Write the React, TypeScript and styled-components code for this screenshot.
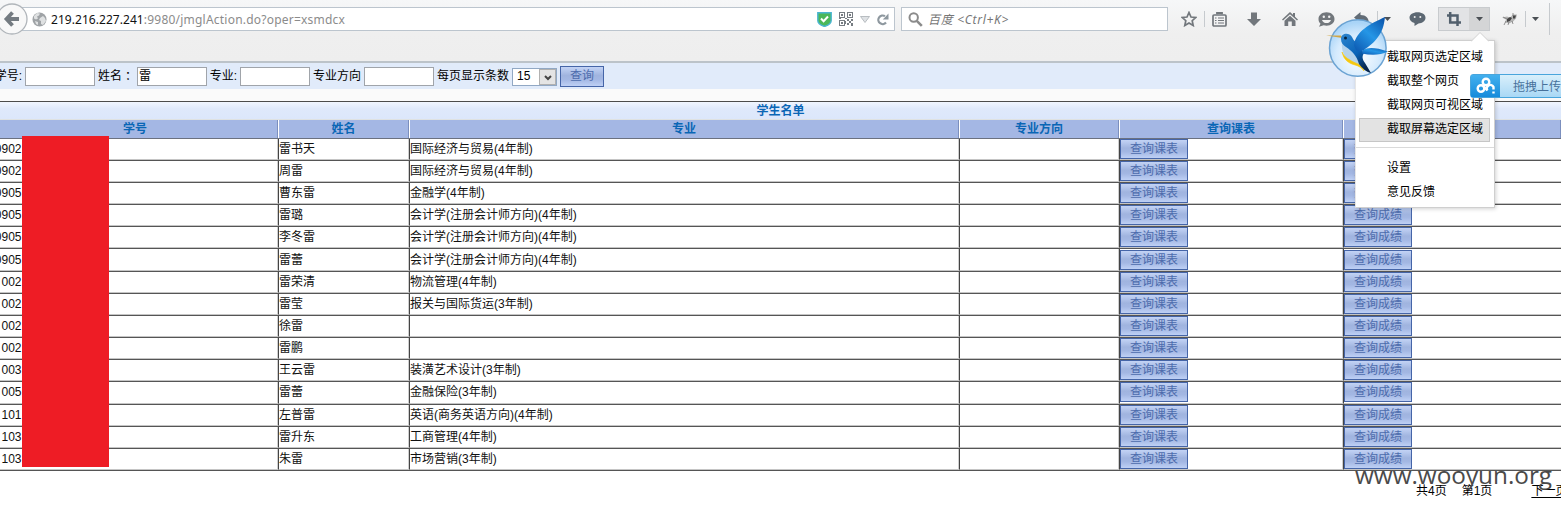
import React from 'react';
import styled, { createGlobalStyle, css } from 'styled-components';

const Global = createGlobalStyle`
  * { box-sizing: border-box; }
  html, body { margin: 0; padding: 0; overflow: hidden; background: #fff; }
  body { font: 12px/16px "Liberation Sans", "Noto Sans CJK SC", sans-serif; color: #000; }
  svg { display: block; flex: none; }
`;

const Screen = styled.div`
  position: relative;
  width: 1561px;
  height: 505px;
  overflow: hidden;
  white-space: nowrap;
`;

/* ---------- browser chrome ---------- */
const Toolbar = styled.header`
  display: flex;
  align-items: flex-start;
  height: 63px;
  padding-top: 7px;
  background: linear-gradient(#f6f7f8, #efefef 55%, #eeeeee);
  border-bottom: 2px solid #bcc3c9;
`;
const fieldBox = css`
  display: flex;
  align-items: center;
  height: 24px;
  background: #fff;
  border: 1px solid #bcc5ce;
`;
const BackButton = styled.div`
  flex: none;
  z-index: 1;
  width: 36px;
  height: 32px;
  margin: -4px -20px 0 -8px;
`;
const AddressBar = styled.div`
  ${fieldBox}
  width: 887px;
  padding: 0 5px 0 23px;
  font-family: "Noto Sans", sans-serif;
  font-size: 12px;
`;
const Url = styled.span`
  flex: 1;
  padding: 1px 0 0 4px;
  color: #8b8b8b;
  letter-spacing: 0.22px;
  b { font-weight: 400; color: #111; letter-spacing: 0.05px; }
`;
const AddressIcons = styled.div`
  display: flex;
  align-items: center;
  gap: 7px;
`;
const SearchBar = styled.div`
  ${fieldBox}
  width: 267px;
  margin-left: 6px;
  padding-left: 6px;
  gap: 5px;
  color: #777;
  font: italic 12px "Noto Sans", "Noto Sans CJK SC", sans-serif;
  letter-spacing: 0.7px;
`;
const Tools = styled.div`
  display: flex;
  align-items: center;
  height: 24px;
  padding-left: 6px;
`;
const Tool = styled.div<{ $w: number; $bg?: string; $shift?: number }>`
  display: flex;
  align-items: center;
  justify-content: center;
  width: ${p => p.$w}px;
  height: 24px;
  padding-left: ${p => p.$shift || 0}px;
  background: ${p => p.$bg || 'none'};
`;
const Divider = styled.div<{ $h?: number; $ml?: number }>`
  width: 1px;
  height: ${p => p.$h || 16}px;
  margin-left: ${p => p.$ml || 0}px;
  background: #c6cace;
`;
const ActiveTool = styled.div`
  display: flex;
  height: 24px;
  outline: 1px solid #c8cbce;
  outline-offset: -1px;
`;

/* ---------- query form ---------- */
const QueryForm = styled.div`
  display: flex;
  align-items: center;
  height: 26px;
  background: #e1ebfa;
`;
const Label = styled.span<{ $w: number }>`
  width: ${p => p.$w}px;
  height: 18px;
  line-height: 18px;
  flex: none;
  display: flex;
  justify-content: flex-end;
  padding-right: 3px;
`;
const WideColon = styled.span`
  font-family: "Noto Sans CJK TC", sans-serif;
`;
const Field = styled.div`
  width: 70px;
  height: 19px;
  flex: none;
  padding-left: 1px;
  line-height: 16px;
  background: #fff;
  border: 1px solid #a0a4aa;
`;
const Select = styled.div`
  display: flex;
  justify-content: space-between;
  width: 45px;
  height: 18px;
  margin: 1px 3px 0 0;
  padding-left: 4px;
  line-height: 15px;
  background: #fff;
  border: 1px solid #91a8c4;
`;
const SelectArrow = styled.span`
  display: flex;
  align-items: center;
  justify-content: center;
  width: 17px;
  padding-top: 3px;
  background: #e4e4e4;
  border: 1px solid #b1b1b1;
`;
const QueryButton = styled.button<{ $w: number; $h: number }>`
  width: ${p => p.$w}px;
  height: ${p => p.$h}px;
  padding: 0;
  flex: none;
  font: inherit;
  line-height: 16px;
  color: #4d6cad;
  border: 1px solid #4565a8;
  background: linear-gradient(#c3d3f5, #a0b4df 45%, #a3b7e3 65%, #bed0f5);
`;
const Spacer = styled.div`
  height: 12px;
  background: #fafafa;
`;

/* ---------- student table ---------- */
const Table = styled.div`
  border-top: 1px solid #4c4c4c;
`;
const TableTitle = styled.div`
  height: 18px;
  line-height: 18px;
  text-align: center;
  font-weight: 700;
  color: #0a66b5;
  background: linear-gradient(#f1f6ff, #dfe9fb 40%, #dce7fb);
  border-bottom: 1px solid #dfe2e2;
`;
const Row = styled.div<{ $head?: boolean }>`
  display: grid;
  grid-template-columns: 278px 131px 550px 160px 224px 218px;
  grid-template-rows: minmax(0, 1fr);
  height: ${p => (p.$head ? 18.7 : 22.16)}px;
  border-bottom: 1px solid ${p => (p.$head ? '#6b7180' : '#555')};
  font-weight: ${p => (p.$head ? 700 : 400)};
  color: ${p => (p.$head ? '#0a66b5' : '#111')};
  background: ${p => (p.$head ? '#a4b7e4' : '#fff')};
`;
const HeadCell = styled.div`
  line-height: 18px;
  text-align: center;
  border-left: 1px solid #fff;
  border-right: 1px solid #7b8fbe;
  &:first-child { padding-right: 7px; border-left: none; }
`;
const Cell = styled.div`
  display: flex;
  align-items: center;
  min-height: 0;
  border-left: 1px solid #444;
  border-right: 1px solid #cfcfcf;
  border-bottom: 1px solid #c5c5c5;
  &:first-child { border-left: none; }
  &:last-child { border-right: none; }
`;
const StudentId = styled.span`
  display: flex;
  justify-content: flex-end;
  width: 21.500px;
`;
const Redaction = styled.div`
  position: absolute;
  left: 22px;
  top: 136px;
  width: 87px;
  height: 331px;
  background: #ee1c25;
`;
const Pager = styled.div`
  display: flex;
  height: 34px;
  padding: 12px 0 0 1416px;
  u { margin-left: 39px; text-underline-offset: 2px; }
  span + span { margin-left: 15px; }
`;
const Watermark = styled.div`
  position: absolute;
  left: 1355px;
  top: 460px;
  font: 24.3px/30px "Open Sans", sans-serif;
  color: #4a4a4a;
`;

/* ---------- floating capture menu ---------- */
const Menu = styled.div`
  position: absolute;
  left: 1355px;
  top: 40px;
  width: 140px;
  height: 168px;
  padding: 5px 4px;
  background: #fff;
  border: 1px solid #cfcfcf;
  border-left-color: #e6e6e6;
  box-shadow: 1px 1px 4px rgba(0, 0, 0, 0.18);
`;
const MenuArrow = styled.svg`
  position: absolute;
  left: 115px;
  top: -9px;
`;
const MenuItem = styled.div<{ $active?: boolean }>`
  height: 24px;
  padding-left: 27px;
  line-height: 21px;
  margin: 0 0 0 -1px;
  border: 1px solid ${p => (p.$active ? '#c6c6c6' : 'transparent')};
  background: ${p => (p.$active ? '#e3e3e3' : 'transparent')};
`;
const MenuRule = styled.div`
  height: 1px;
  margin: 5px -4px 9px;
  background: #dadada;
`;
const Bird = styled.svg`
  position: absolute;
  left: 1325px;
  top: 14px;
`;
const Uploader = styled.div`
  position: absolute;
  left: 1470px;
  top: 74px;
  display: flex;
  width: 110px;
  height: 24px;
  color: #47719b;
  line-height: 25px;
  background: linear-gradient(#d9effb, #a9d8f5);
  border: 1px solid #49a5dc;
  border-radius: 3px;
`;
const UploaderLogo = styled.div`
  display: flex;
  align-items: center;
  justify-content: center;
  width: 29px;
  height: 22px;
  margin-right: 13px;
  background: linear-gradient(#43b0ee, #168bdb);
`;

const Caret = ({ color = '#4b5055' }: { color?: string }) => (
  <svg width="7" height="4" viewBox="0 0 7 4"><path d="M0 0h7L3.5 4z" fill={color} /></svg>
);

const BackIcon = () => (
  <svg width="36" height="32" viewBox="0 0 36 32">
    <circle cx="20" cy="16" r="15" fill="#f8f8f8" stroke="#b0b5ba" strokeWidth="1.3" />
    <path d="M27 16H16M20.500 9.500L14.500 16l6 6.500" fill="none" stroke="#747b81" strokeWidth="3.800" />
  </svg>
);
const GlobeIcon = () => (
  <svg width="15" height="15" viewBox="0 0 15 15">
    <circle cx="7.500" cy="7.500" r="7" fill="#9fa3a6" />
    <path d="M2 4l3-3 3 .5-1 2-2 1 1 2-2 1-2-1zM8 6l3-2 2 2 1 3-3 4-2-1V9L7 8zM3 9l3 1 0 3-2-1z" fill="#dfe1e2" />
  </svg>
);
const ShieldIcon = () => (
  <svg width="15" height="15" viewBox="0 0 15 15">
    <path d="M.8.8h13.400v7.700c0 3-3.700 5-6.700 6-3-1-6.700-3-6.700-6z" fill="#4bb75a" stroke="#4ab5d1" strokeWidth="1.400" />
    <path d="M4 6.500l2.600 2.700L11 4.500" fill="none" stroke="#fff" strokeWidth="2" />
  </svg>
);
const QrIcon = () => (
  <svg width="14" height="14" viewBox="0 0 14 14" shapeRendering="crispEdges">
    <path d="M.5.5h5v5h-5zM8.500.5h5v5h-5zM.5 8.500h5v5h-5z" fill="none" stroke="#777d83" />
    <path d="M2 2h2v2H2zM10 2h2v2h-2zM2 10h2v2H2zM8 7h2v2H8zM10 9h2v2h-2zM12 7h2v2h-2zM8 11h2v2H8zM12 11h2v3h-2zM6 6h2v1H6zM6 9h1v3H6zM0 6h2v1H0z" fill="#777d83" />
  </svg>
);
const ReloadIcon = () => (
  <svg width="12" height="13" viewBox="0 0 12 13">
    <path d="M9 9.500A4.300 4.300 0 1 1 8 3.200" fill="none" stroke="#8e989f" strokeWidth="2.200" />
    <path d="M11.500.5v6H5.800z" fill="#8e989f" />
  </svg>
);
const SearchIcon = () => (
  <svg width="15" height="15" viewBox="0 0 15 15" fill="none" stroke="#8b8b8b">
    <circle cx="5.700" cy="5.500" r="4.200" strokeWidth="2" />
    <path d="M8.800 8.800l5 5" strokeWidth="2.600" />
  </svg>
);
const StarIcon = () => (
  <svg width="16" height="16" viewBox="0 0 16 16">
    <path d="M8 1.500l2 4.500 4.800.5-3.600 3.200 1 4.800L8 12l-4.200 2.500 1-4.800L1.200 6.500 6 6z" fill="none" stroke="#72777c" strokeWidth="1.700" />
  </svg>
);
const ListIcon = () => (
  <svg width="15" height="15" viewBox="0 0 15 15" fill="none" stroke="#72777c">
    <rect x="1" y="3" width="13" height="11" rx="1" strokeWidth="1.700" />
    <path d="M5 2.300V1h5v1.300" strokeWidth="1.800" />
    <path d="M3 6h1.500M6 6h6M3 8.500h1.500M6 8.500h6M3 11h1.500M6 11h6" strokeWidth="1.200" />
  </svg>
);
const DownIcon = () => (
  <svg width="14" height="14" viewBox="0 0 14 14"><path d="M4 .5h6V7h4l-7 7-7-7h4z" fill="#72777c" /></svg>
);
const HomeIcon = () => (
  <svg width="16" height="14" viewBox="0 0 16 14">
    <path d="M0 7.500L8 0l3 2.800V1h2v3.700L16 7.500l-1 1-7-6.300L1 8.500zM2.500 8.700L8 3.800l5.500 4.900V14H9.800V9.500H6.200V14H2.500z" fill="#72777c" />
  </svg>
);
const SmileIcon = () => (
  <svg width="17" height="15" viewBox="0 0 17 15">
    <path d="M8.500.3c4.600 0 8 2.900 8 6.700s-3.400 6.700-8 6.700c-1 0-2-.1-2.800-.4L1 14.700l1.500-3C1.200 10.500.5 9 .5 7 .5 3.200 4 .3 8.500.3z" fill="#72777c" />
    <circle cx="5.800" cy="4.800" r="1.200" fill="#f3f3f3" /><circle cx="11.200" cy="4.800" r="1.200" fill="#f3f3f3" />
    <path d="M4 8h9c-.5 2-2.300 3.100-4.500 3.100S4.500 10 4 8z" fill="#f3f3f3" />
  </svg>
);
const UndoIcon = () => (
  <svg width="16" height="14" viewBox="0 0 16 14">
    <path d="M6.500 0v3C12 3 15 6 15 12c-2-3-4-4-8.500-4v3L0 5.500z" fill="#626c76" />
  </svg>
);
const ChatIcon = () => (
  <svg width="17" height="14" viewBox="0 0 17 14">
    <path d="M8.500.3c4.600 0 8 2.300 8 5.500s-3.400 5.700-7 5.700L5.500 14v-3C2.500 10.200.5 8.300.5 5.800.5 2.600 4 .3 8.500.3z" fill="#5c6873" />
    <circle cx="5.700" cy="5" r="1" fill="#eee" /><circle cx="11.300" cy="5" r="1" fill="#eee" />
  </svg>
);
const CropIcon = () => (
  <svg width="14" height="14" viewBox="0 0 14 14">
    <path d="M3.200 0v10.500H14M0 3.500h10.500V14" fill="none" stroke="#52606d" strokeWidth="2.500" />
  </svg>
);
const FlyIcon = () => (
  <svg width="16" height="13" viewBox="0 0 16 13">
    <path d="M0 4.500l5-1 3 1 3-3 4 0-1 4-3 3-4 2-4-1 1-3z" fill="#b4b4b4" />
    <path d="M5 6l3-2 2 1-2 3-3 1zM11 2.500l3 0-1 3-2 0z" fill="#454545" />
    <path d="M4 8l-2 4M7 9l-1 3M10 8l1 3M11 3V0M1 4l4 2" stroke="#777" strokeWidth=".8" />
  </svg>
);

const BirdLogo = () => (
  <Bird width="64" height="66" viewBox="0 0 64 66">
    <defs>
      <radialGradient id="disc" cx=".5" cy=".65" r=".6">
        <stop offset="0" stopColor="#ffffff" /><stop offset=".65" stopColor="#d4eafd" /><stop offset="1" stopColor="#a9d4f7" />
      </radialGradient>
      <linearGradient id="wing" x1=".9" y1="0" x2=".1" y2="1">
        <stop offset="0" stopColor="#0b56ad" /><stop offset=".5" stopColor="#2596e6" /><stop offset="1" stopColor="#0e5cb4" />
      </linearGradient>
      <linearGradient id="body" x1="0" y1="0" x2=".6" y2="1">
        <stop offset="0" stopColor="#2d86cf" /><stop offset=".6" stopColor="#0a63b8" /><stop offset="1" stopColor="#07264d" />
      </linearGradient>
    </defs>
    <circle cx="32.800" cy="34" r="28.300" fill="url(#disc)" stroke="#6ba3d3" strokeWidth="1.500" />
    <path d="M17 28c-1 10 3 17 10 20l10 5-3-12z" fill="#b5d3ec" />
    <path d="M17 38c2 8 6 11 13 13 4 1 7 3 9 6-2-8-9-7-14-11-4-2-6-4-8-8z" fill="#f6c80f" stroke="#f6c80f" strokeWidth=".6" />
    <path d="M1 21.500l15 0 1.500 2.500z" fill="#d0a646" />
    <path d="M16 25c0-6 8-7 11-2 1 2 2 4 4 5l8 11c-2 3-2 6 1 10l6 10c-5-1-9-5-12-9-2-8-7-13-13-17-3-2-5-4-5-8z" fill="url(#body)" />
    <path d="M38 36c5-3 12-3 25 1.500-8 4-17 4-26 2z" fill="url(#wing)" />
    <path d="M29 31C31 17 45 10 60 3c-1 9-3 15-7 20-4 6-9 9-14 13-3 2-8 3-10-5z" fill="url(#wing)" />
    <circle cx="20.500" cy="24" r="1.500" fill="#06243f" />
  </Bird>
);

const headings = ['学号', '姓名', '专业', '专业方向', '查询课表', '查询成绩'];

const rows: [string, string, string][] = [
  ['0902', '雷书天', '国际经济与贸易(4年制)'],
  ['0902', '周雷', '国际经济与贸易(4年制)'],
  ['0905', '曹东雷', '金融学(4年制)'],
  ['0905', '雷璐', '会计学(注册会计师方向)(4年制)'],
  ['0905', '李冬雷', '会计学(注册会计师方向)(4年制)'],
  ['0905', '雷蕾', '会计学(注册会计师方向)(4年制)'],
  ['002', '雷荣清', '物流管理(4年制)'],
  ['002', '雷莹', '报关与国际货运(3年制)'],
  ['002', '徐雷', ''],
  ['002', '雷鹏', ''],
  ['003', '王云雷', '装潢艺术设计(3年制)'],
  ['005', '雷蕾', '金融保险(3年制)'],
  ['101', '左普雷', '英语(商务英语方向)(4年制)'],
  ['103', '雷升东', '工商管理(4年制)'],
  ['103', '朱雷', '市场营销(3年制)'],
];

export default function App() {
  return (
    <Screen>
      <Global />
      <Toolbar>
        <BackButton><BackIcon /></BackButton>
        <AddressBar>
          <GlobeIcon />
          <Url><b>219.216.227.241</b>:9980/jmglAction.do?oper=xsmdcx</Url>
          <AddressIcons>
            <ShieldIcon /><QrIcon />
            <svg width="10" height="7" viewBox="0 0 10 7"><path d="M.5.5h9L5 6.500z" fill="#dfe2e5" stroke="#b8bdc1" /></svg>
            <ReloadIcon />
          </AddressIcons>
        </AddressBar>
        <SearchBar><SearchIcon />百度 &lt;Ctrl+K&gt;</SearchBar>
        <Tools>
          <Tool $w={30}><StarIcon /></Tool>
          <Divider />
          <Tool $w={28}><ListIcon /></Tool>
          <Tool $w={42}><DownIcon /></Tool>
          <Tool $w={30}><HomeIcon /></Tool>
          <Tool $w={42}><SmileIcon /></Tool>
          <Tool $w={30}><UndoIcon /></Tool>
          <Divider />
          <Tool $w={18}><Caret /></Tool>
          <Tool $w={42}><ChatIcon /></Tool>
          <ActiveTool>
            <Tool $w={31} $bg="#e2e3e5"><CropIcon /></Tool>
            <Tool $w={21} $bg="#d4d5d6"><Caret /></Tool>
          </ActiveTool>
          <Tool $w={35} $shift={5}><FlyIcon /></Tool>
          <Divider />
          <Tool $w={18}><Caret /></Tool>
          <Divider $h={32} $ml={5} />
        </Tools>
      </Toolbar>

      <QueryForm>
        <Label $w={25}>学号:</Label><Field />
        <Label $w={42}>姓名<WideColon lang="zh-TW">：</WideColon></Label><Field>雷</Field>
        <Label $w={33}>专业:</Label><Field />
        <Label $w={54}>专业方向</Label><Field />
        <Label $w={78}>每页显示条数</Label>
        <Select>15<SelectArrow>
          <svg width="8" height="6" viewBox="0 0 8 6"><path d="M1 1l3 3 3-3" fill="none" stroke="#444" strokeWidth="2" /></svg>
        </SelectArrow></Select>
        <QueryButton $w={44} $h={21}>查询</QueryButton>
      </QueryForm>
      <Spacer />

      <Table>
        <TableTitle>学生名单</TableTitle>
        <Row $head>
          {headings.map(t => <HeadCell key={t}>{t}</HeadCell>)}
        </Row>
        {rows.map(([id, name, major], i) => (
          <Row key={i}>
            <Cell><StudentId>{id}</StudentId></Cell>
            <Cell>{name}</Cell>
            <Cell>{major}</Cell>
            <Cell />
            <Cell><QueryButton $w={68} $h={20}>查询课表</QueryButton></Cell>
            <Cell><QueryButton $w={68} $h={20}>查询成绩</QueryButton></Cell>
          </Row>
        ))}
      </Table>
      <Pager><span>共4页</span><span>第1页</span><u>下一页</u></Pager>

      <Redaction />
      <Watermark>www.wooyun.org</Watermark>
      <Menu>
        <MenuArrow width="18" height="10" viewBox="0 0 18 10"><path d="M0 9.500l9-9 9 9" fill="#fff" stroke="#d0d0d0" /></MenuArrow>
        <MenuItem>截取网页选定区域</MenuItem>
        <MenuItem>截取整个网页</MenuItem>
        <MenuItem>截取网页可视区域</MenuItem>
        <MenuItem $active>截取屏幕选定区域</MenuItem>
        <MenuRule />
        <MenuItem>设置</MenuItem>
        <MenuItem>意见反馈</MenuItem>
      </Menu>
      <BirdLogo />
      <Uploader>
        <UploaderLogo>
          <svg width="20" height="18" viewBox="0 0 20 18" fill="none" stroke="#fff" strokeWidth="2.400">
            <circle cx="5" cy="11.500" r="3.300" /><circle cx="10" cy="5" r="3.300" />
            <path d="M7.500 9.500l4 4a3.500 3.500 0 1 1 6-3.500v2.500M17.500 14.500v2" />
          </svg>
        </UploaderLogo>
        拖拽上传
      </Uploader>
    </Screen>
  );
}
